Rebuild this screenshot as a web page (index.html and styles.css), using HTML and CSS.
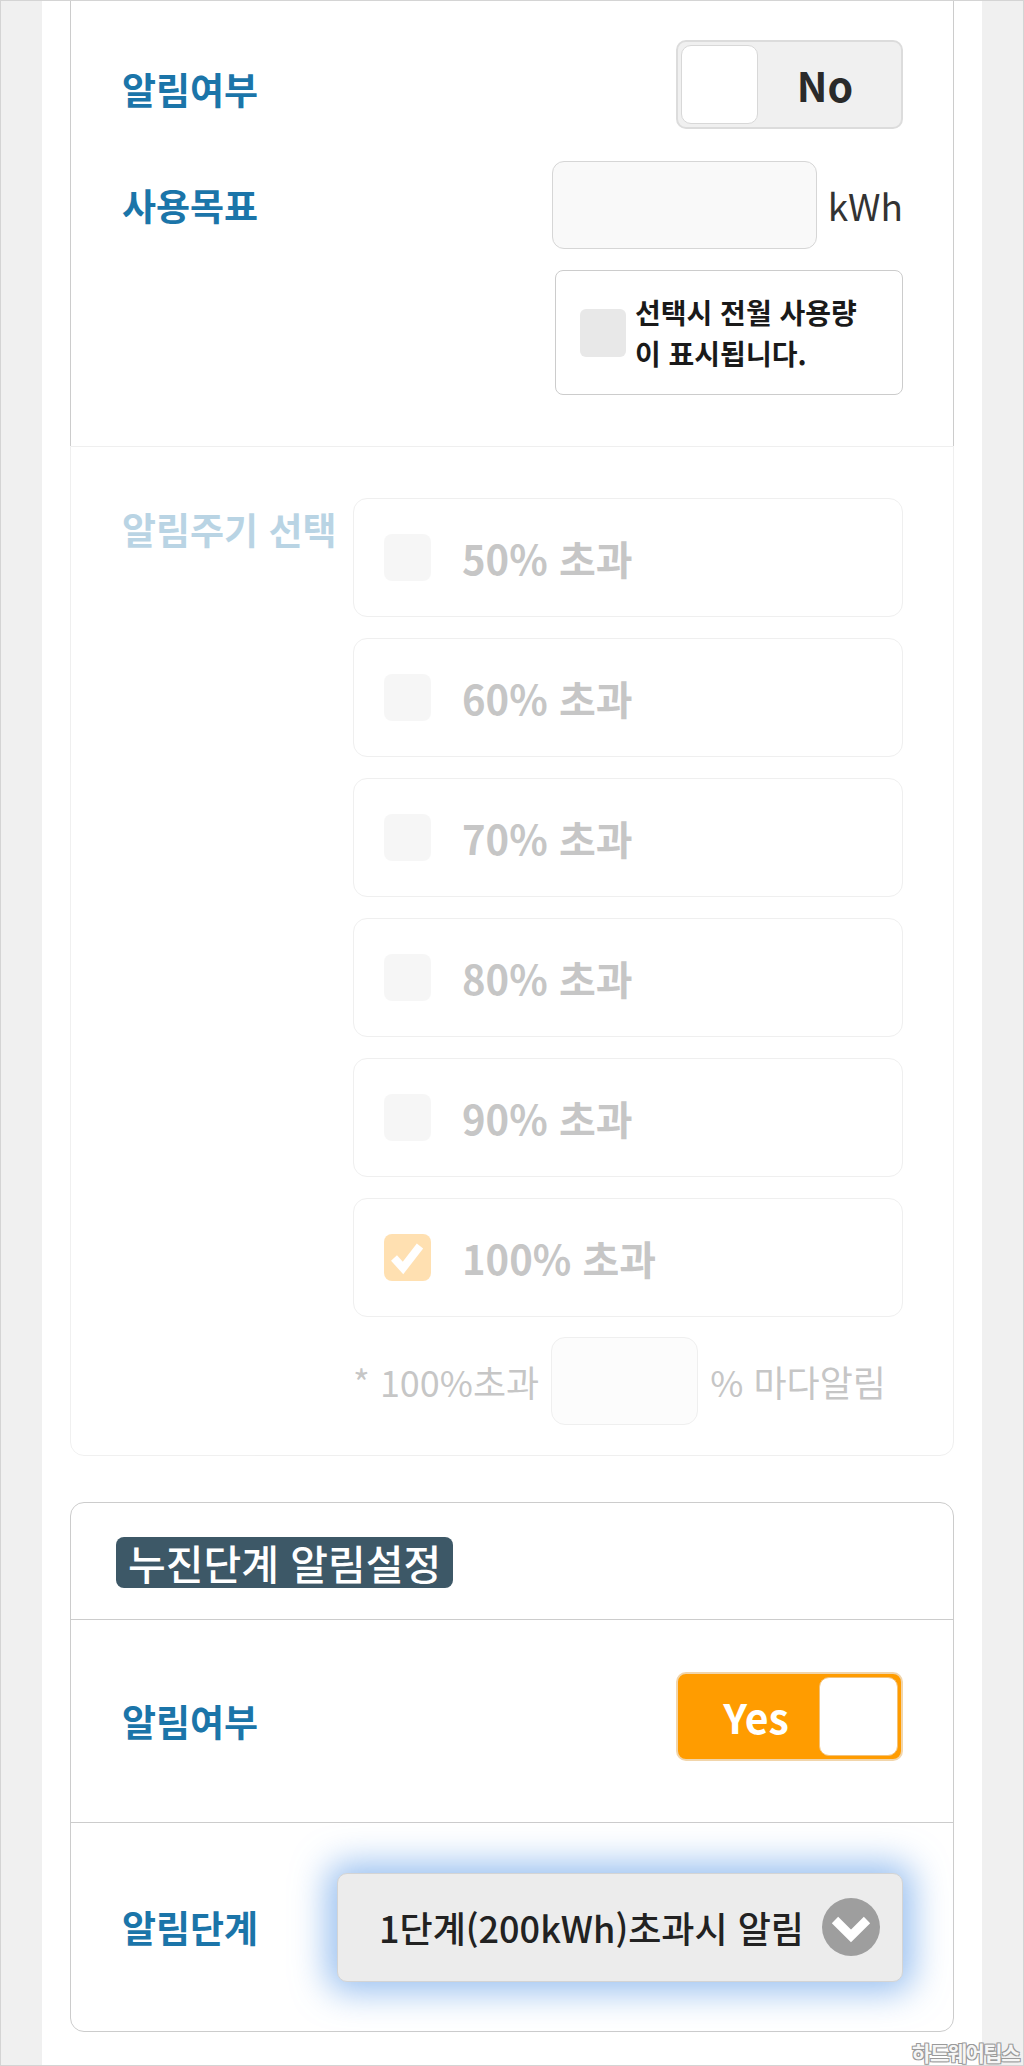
FILE: index.html
```html
<!DOCTYPE html>
<html lang="ko">
<head>
<meta charset="utf-8">
<title>알림설정</title>
<link rel="stylesheet" href="styles.css">
</head>
<body>
<div class="page">
  <div class="card-top">
    <div class="sec-main">
      <div class="row row-toggle">
        <span class="lbl lbl-low">알림여부</span>
        <div class="toggle off"><span class="knob"></span><span class="tg-text">No</span></div>
      </div>
      <div class="row row-goal">
        <span class="lbl">사용목표</span>
        <div class="goal"><span class="input"></span><span class="unit">kWh</span></div>
      </div>
      <div class="row row-prev">
        <div class="prevbox"><span class="sq"></span><span class="prevtext">선택시 전월 사용량 이 표시됩니다.</span></div>
      </div>
    </div>
    <div class="sec-cycle">
      <span class="lbl lbl-cycle">알림주기 선택</span>
      <div class="opts">
        <div class="opt"><span class="cb"></span><span class="opt-text">50% 초과</span></div>
        <div class="opt"><span class="cb"></span><span class="opt-text">60% 초과</span></div>
        <div class="opt"><span class="cb"></span><span class="opt-text">70% 초과</span></div>
        <div class="opt"><span class="cb"></span><span class="opt-text">80% 초과</span></div>
        <div class="opt"><span class="cb"></span><span class="opt-text">90% 초과</span></div>
        <div class="opt"><span class="cb checked"><svg viewBox="0 0 47 47" width="47" height="47"><polyline points="10,24 19,34 36,12" fill="none" stroke="#fff" stroke-width="8" stroke-linejoin="miter"/></svg></span><span class="opt-text">100% 초과</span></div>
        <div class="note"><span class="note-text">* 100%초과</span><span class="note-input"></span><span class="note-text">% 마다알림</span></div>
      </div>
    </div>
  </div>

  <div class="card-step">
    <div class="step-head"><span class="badge">누진단계 알림설정</span></div>
    <div class="step-row step-row-toggle">
      <span class="lbl">알림여부</span>
      <div class="toggle on"><span class="tg-text">Yes</span><span class="knob"></span></div>
    </div>
    <div class="step-row step-row-select">
      <span class="lbl">알림단계</span>
      <div class="select">
        <span class="select-text">1단계(200kWh)초과시 알림</span>
        <svg class="chev" viewBox="0 0 58 58" width="58" height="58"><circle cx="29" cy="29" r="29" fill="#9e9e9e"/><polyline points="13,22 29,38 45,22" fill="none" stroke="#fff" stroke-width="9"/></svg>
      </div>
    </div>
  </div>
  <div class="watermark">하드웨어팁스</div>
</div>
</body>
</html>
```
FILE: styles.css
```css
html, body {
  margin: 0;
  padding: 0;
}
body {
  background: #f0f0f0;
  font-family: "Noto Sans CJK KR", "Noto Sans", sans-serif;
  border: 1px solid #d4d4d4;
  height: 2066px;
  box-sizing: border-box;
  overflow: hidden;
}
.page {
  position: relative;
  margin: 0 41px;
  padding: 0 28px;
  background: #fff;
  height: 100%;
}
.lbl {
  font-size: 37px;
  font-weight: 700;
  color: #1b75a9;
  line-height: 1;
  white-space: nowrap;
}
.sec-main {
  border-left: 1px solid #cccccc;
  border-right: 1px solid #cccccc;
  padding: 39px 50px 51px 51px;
}
.row {
  display: flex;
  align-items: center;
  justify-content: space-between;
}
.lbl-low {
  margin-top: 10px;
}
.row-goal {
  margin-top: 32px;
}
.row-prev {
  margin-top: 21px;
  justify-content: flex-end;
}
.toggle {
  width: 227px;
  height: 89px;
  box-sizing: border-box;
  border: 2px solid #dcdcdc;
  border-radius: 10px;
  background: #f0f0f0;
  display: flex;
  align-items: center;
  padding: 3px;
}
.knob {
  width: 77px;
  height: 79px;
  box-sizing: border-box;
  background: #fff;
  border: 1px solid #d8d8d8;
  border-radius: 10px;
  flex-shrink: 0;
}
.tg-text {
  flex: 1;
  text-align: center;
  font-size: 41px;
  font-weight: 700;
  color: #2a2a2a;
  line-height: 1;
  padding-right: 6px;
}
.toggle.on {
  background: #ff9c00;
  border-color: #f1d5ab;
  margin-bottom: 10px;
}
.toggle.on .tg-text {
  color: #fff;
  padding-right: 0;
  padding-left: 12px;
}
.toggle.on .knob {
  width: 79px;
  border-color: #f3c27a;
}
.goal {
  display: flex;
  align-items: center;
}
.input {
  width: 265px;
  height: 88px;
  box-sizing: border-box;
  border: 1px solid #d6d6d6;
  background: #f9f9f9;
  border-radius: 12px;
}
.unit {
  margin-left: 11px;
  font-size: 37px;
  color: #333;
  line-height: 1;
}
.prevbox {
  width: 348px;
  height: 125px;
  box-sizing: border-box;
  border: 1px solid #cccccc;
  border-radius: 8px;
  display: flex;
  align-items: center;
  padding: 0 14px 0 24px;
}
.sq {
  width: 46px;
  height: 48px;
  border-radius: 6px;
  background: #e8e8e8;
  flex-shrink: 0;
  margin-right: 9px;
}
.prevtext {
  font-size: 28px;
  font-weight: 700;
  line-height: 41px;
  color: #1a1a1a;
  max-width: 248px;
}
.sec-cycle {
  border: 1px solid #cccccc;
  border-radius: 0 0 14px 14px;
  opacity: 0.3;
  padding: 51px 50px 30px 51px;
  display: grid;
  grid-template-columns: 231px 1fr;
  align-items: start;
}
.lbl-cycle {
  line-height: 62px;
}
.opts {
  display: flex;
  flex-direction: column;
  gap: 21px;
}
.opt {
  height: 119px;
  box-sizing: border-box;
  border: 1px solid #cccccc;
  border-radius: 14px;
  display: flex;
  align-items: center;
  padding-left: 30px;
}
.cb {
  width: 47px;
  height: 47px;
  border-radius: 8px;
  background: #e4e4e4;
  margin-right: 31px;
  flex-shrink: 0;
  display: flex;
}
.cb.checked {
  background: #ff9c00;
}
.opt-text {
  font-size: 40px;
  font-weight: 700;
  color: #444;
  line-height: 1;
}
.note {
  margin-top: -1px;
  display: flex;
  align-items: center;
  gap: 12px;
}
.note-text {
  font-size: 36px;
  color: #444;
  line-height: 1;
}
.note-input {
  width: 147px;
  height: 88px;
  box-sizing: border-box;
  border: 1px solid #cccccc;
  border-radius: 14px;
  background: #f6f6f6;
}
.card-step {
  margin-top: 46px;
  border: 1px solid #cccccc;
  border-radius: 14px;
}
.step-head {
  padding: 34px 45px 31px;
  border-bottom: 1px solid #cccccc;
  display: flex;
}
.badge {
  height: 51px;
  line-height: 51px;
  padding: 0 12px;
  font-size: 41px;
  font-weight: 500;
  color: #fff;
  background: #3d5867;
  border-radius: 8px;
}
.step-row {
  display: flex;
  align-items: center;
  justify-content: space-between;
  padding: 0 50px 0 51px;
}
.step-row-toggle {
  height: 202px;
  border-bottom: 1px solid #cccccc;
}
.step-row-select {
  height: 208px;
}
.select {
  width: 566px;
  height: 109px;
  box-sizing: border-box;
  background: #ececec;
  border: 1px solid #d4d4d4;
  border-radius: 10px;
  box-shadow: 0 0 34px 10px rgba(85, 150, 230, 0.6);
  display: flex;
  align-items: center;
  justify-content: space-between;
  padding: 0 22px 0 41px;
}
.select-text {
  font-size: 36px;
  font-weight: 500;
  color: #222;
  line-height: 1;
  white-space: nowrap;
}
.chev {
  flex-shrink: 0;
}
.watermark {
  position: absolute;
  right: -37px;
  bottom: 2px;
  font-size: 21px;
  font-weight: 700;
  letter-spacing: -1.5px;
  color: #f6f6f6;
  text-shadow: 1px 1px 0 #9a9a9a, -1px -1px 0 #9a9a9a, 1px -1px 0 #9a9a9a, -1px 1px 0 #9a9a9a;
  line-height: 1;
}
```
